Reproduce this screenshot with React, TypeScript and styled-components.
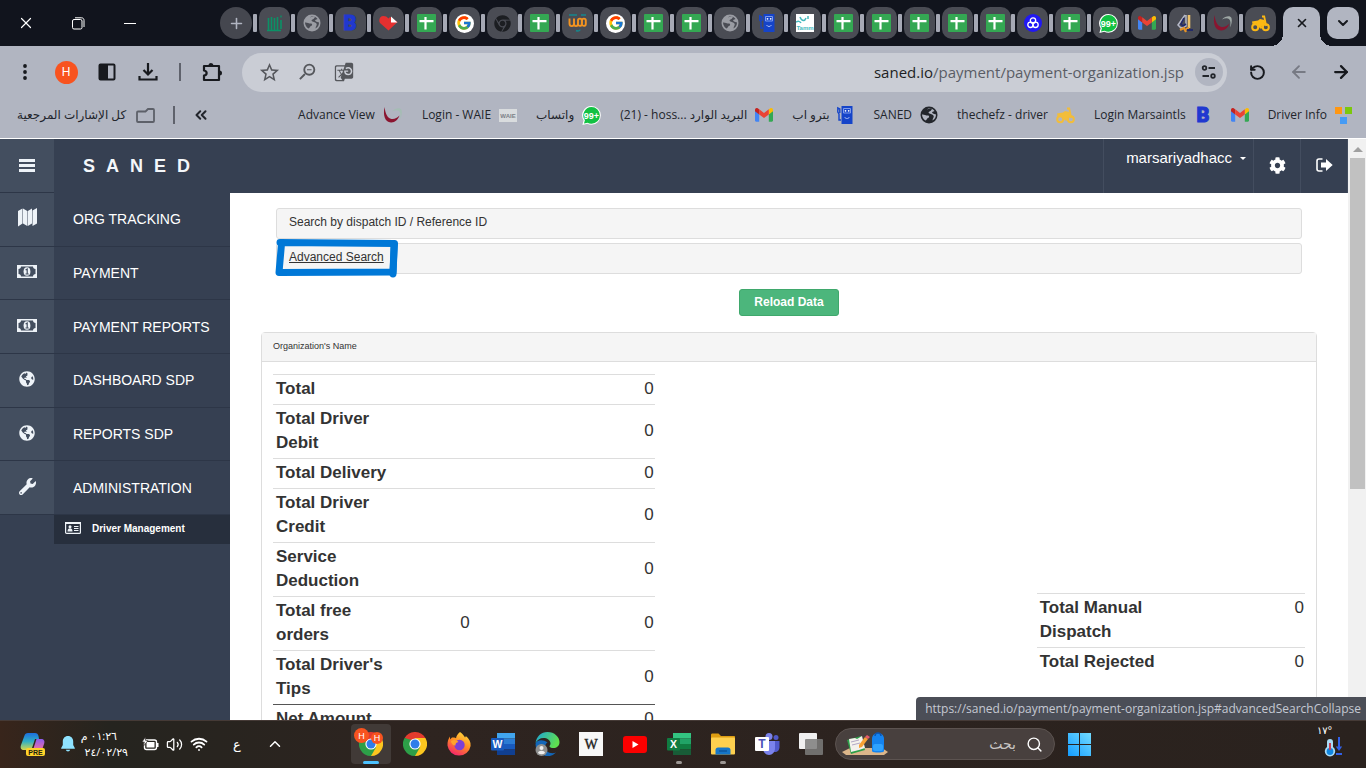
import type { ReactNode } from 'react';
import styled, { createGlobalStyle, css } from 'styled-components';
import { FaGlobeAmericas, FaWrench, FaCog, FaChrome } from 'react-icons/fa';
import { FcGoogle } from 'react-icons/fc';
import { MdStarBorder, MdZoomOut, MdGTranslate } from 'react-icons/md';
import { RotateCcw, ArrowLeft, ArrowRight, ChevronDown, ChevronUp, ChevronsLeft, X, Plus, Wifi, Volume2, Search } from 'lucide-react';

/* ---------- favicons ---------- */

const SheetsIcon = () => (
  <svg width="19" height="18" viewBox="0 0 19 18">
    <rect width="19" height="18" rx="1" fill="#34a853" />
    <path d="M2.5 7.2h14M8.5 3v12.5" stroke="#fff" strokeWidth="2.2" />
  </svg>
);

const GmailIcon = () => (
  <svg width="18" height="14" viewBox="0 0 18 14">
    <path d="M0 2.2v10.3c0 .7.5 1.2 1.2 1.2h3V6.3z" fill="#4285f4" />
    <path d="M18 2.2v10.3c0 .7-.5 1.2-1.2 1.2h-3V6.3z" fill="#34a853" />
    <path d="M13.8 1.4v5L18 3.3V1.9C18 .3 16.2-.6 14.9.4z" fill="#fbbc04" />
    <path d="M4.2 1.4v5L0 3.3V1.9C0 .3 1.8-.6 3.1.4z" fill="#c5221f" />
    <path d="M4.2 6.4V1.3L9 4.900l4.800-3.600v5.100L9 10z" fill="#ea4335" />
  </svg>
);

const GoogleIcon = () => (
  <GoogleDisc><FcGoogle size={16} /></GoogleDisc>
);

const LetterB = () => (
  <svg width="18" height="26" viewBox="0 0 18 26">
    <text x="9" y="20" textAnchor="middle" fontFamily="Roboto, sans-serif" fontWeight="900" fontSize="20" fill="#2038d0" stroke="#2038d0">B</text>
  </svg>
);

const WhatsAppBadge = () => (
  <svg width="19" height="19" viewBox="0 0 19 19">
    <path d="M9.500 0a9.300 9.300 0 0 1 0 18.700c-1.500 0-3-.4-4.200-1L.4 19l1.200-4.700A9.300 9.300 0 0 1 9.500 0z" fill="#fff" />
    <path d="M9.500 1a8.400 8.400 0 0 1 0 16.800c-1.500 0-2.800-.4-4-1.100L2 17.600l.9-3.300A8.400 8.400 0 0 1 9.500 1z" fill="#12c143" />
    <text x="9.500" y="12.500" textAnchor="middle" fontFamily="Liberation Sans, sans-serif" fontWeight="700" fontSize="9" fill="#fff">99+</text>
  </svg>
);

const PumpIcon = () => (
  <svg width="17" height="18" viewBox="0 0 17 18">
    <path d="M4.500 0h11v18H4.500z" fill="#1544c9" />
    <path d="M6.500 2.500h7v4.500h-7z" fill="none" stroke="#7f9bea" />
    <path d="M4 14H2V8L.8 6V2l2 1v4" fill="none" stroke="#1544c9" strokeWidth="1.400" />
    <path d="M7.500 11c1.200 2 3.800 2 5 0" fill="none" stroke="#a9bdf5" />
    <circle cx="8.500" cy="4.800" r=".9" fill="#fff" />
    <circle cx="11.700" cy="4.800" r=".9" fill="#fff" />
  </svg>
);

const SwooshIcon = ({ tail = '#9fa8a6' }: { tail?: string }) => (
  <svg width="20" height="18" viewBox="0 0 20 18">
    <path d="M1.500 1C0 9 1.500 16 8 16.500c4 .2 7-3 8.500-7-2.500 2.500-5 4-8 3.500C4.500 12.300 2.500 8 1.500 1z" fill="#8a1530" />
    <path d="M9 5.500C12 2.500 17 1 18.500 4c.8 2.500 0 7-1.500 9.500.8-4 .8-7-1-8.500-1.800-1.200-4.500-.5-7 .5z" fill={tail} />
  </svg>
);

const BarsLogo = () => (
  <svg width="16" height="18" viewBox="0 0 16 18">
    <path d="M1.500 4v12M4.500 3v13M7.500 4v12M10.500 3v13M14 6v9" stroke="#0b9166" strokeWidth="1.600" />
    <path d="M0 16.500h14M14 1.500v2" stroke="#0b9166" strokeWidth="1.400" />
  </svg>
);

const HeartIcon = () => (
  <svg width="19" height="18" viewBox="0 0 19 18">
    <path d="M9.500 16.500L1 9C-.8 6 1 2 4.500 2c2 0 3.500.8 5 2.500l1.500-1.500 7.500 5z" fill="#e53030" />
    <path d="M12 2.500v6h6.500z" fill="#fff" />
  </svg>
);

const UggLogo = () => (
  <svg width="19" height="18" viewBox="0 0 19 18">
    <path d="M1.500 4.500v5c0 3.500 4.500 3.500 4.500 0v-5M6 9.500c0 3.500 4 3.500 4 0M10 6.500c0-2.500 3.800-2.500 3.800 0v3.500c0 2.500-3.800 2.500-3.800 0zM14 6.500c0-2.500 3.800-2.500 3.800 0v3.500c0 2.500-3.800 2.500-3.800 0z" fill="none" stroke="#f39421" strokeWidth="1.900" />
    <path d="M1 1h8M13 1h5M8 16.500c2 1 4 .5 4-1" fill="none" stroke="#16868d" strokeWidth="1.400" />
  </svg>
);

const TammLogo = () => (
  <svg width="18" height="18" viewBox="0 0 18 18">
    <rect width="18" height="18" fill="#fff" />
    <path d="M4 3c2 5 5 4 6 1M12 2v3M0 8c2-1 4-1 5 1" fill="none" stroke="#44b9bd" strokeWidth="1.500" />
    <text x="9" y="16" textAnchor="middle" fontFamily="Liberation Sans, sans-serif" fontWeight="700" fontSize="6" fill="#44b9bd">Tamm</text>
  </svg>
);

const TrefoilIcon = () => (
  <svg width="18" height="18" viewBox="0 0 18 18">
    <circle cx="9" cy="9" r="9" fill="#2118f5" />
    <g fill="none" stroke="#fff" strokeWidth="1.300">
      <circle cx="9" cy="6.500" r="2.700" />
      <circle cx="6.500" cy="10.800" r="2.700" />
      <circle cx="11.500" cy="10.800" r="2.700" />
    </g>
  </svg>
);

const CraneIcon = () => (
  <svg width="19" height="19" viewBox="0 0 19 19">
    <path d="M10 1L3 11l3 3 5-2V1" fill="none" stroke="#b6b9c8" strokeWidth="1.500" />
    <path d="M9 4L6 10l2 2 3-2" fill="none" stroke="#20286b" strokeWidth="1.600" />
    <path d="M14 1v13" stroke="#edc26b" strokeWidth="2.600" />
    <path d="M5 16l4-2 2 4M11 15l3-1" fill="none" stroke="#e59327" strokeWidth="2.200" />
    <path d="M12 16h6" stroke="#20286b" strokeWidth="1.800" />
  </svg>
);

const BikeIcon = ({ color }: { color: string }) => (
  <svg width="19" height="17" viewBox="0 0 19 17">
    <g fill="none" stroke={color}>
      <circle cx="4.200" cy="12.300" r="3" strokeWidth="2" />
      <circle cx="14.800" cy="12.300" r="3" strokeWidth="2" />
      <path d="M11 1.500h2.200l2 9.500M3 8l5-.5 1.500 5h2L13.500 6" strokeWidth="1.800" />
    </g>
    <path d="M1 6.500l6-1L9 4l4.500 1-1.500 5.500-3 2.500-3.500-4.500-4 .5z" fill={color} />
  </svg>
);

const WaieLogo = () => (
  <svg width="18" height="13" viewBox="0 0 18 13">
    <rect width="18" height="13" fill="#d9dcde" />
    <text x="9" y="9" textAnchor="middle" fontFamily="Liberation Sans, sans-serif" fontWeight="700" fontSize="6" fill="#7b8086">WAIE</text>
  </svg>
);

const BlocksIcon = () => (
  <svg width="17" height="17" viewBox="0 0 17 17">
    <path d="M0 0h7v7H0z" fill="#ff9712" />
    <path d="M10 0h7v7h-7z" fill="#7cc80c" />
    <path d="M5 10h7v7H5z" fill="#459bf5" />
  </svg>
);

const GlobeIcon = ({ color, land }: { color: string; land: string }) => (
  <svg width="18" height="18" viewBox="0 0 18 18">
    <circle cx="9" cy="9" r="8.500" fill={color} />
    <path d="M2 8.500C3.500 8 5.500 9.500 8 9.500c1.500 0 1.500 2 0 2.500-1.500.300-1 2-2.500 2.500C3.500 13.500 2 11 2 8.500z" fill={land} />
    <path d="M7 3.500C9 2.500 10.500 2 12 3c-1 1-.5 1.800-2 2.300-1.600.5-2 1.500-.5 2.200 2 .6 3.500 1 4.200 2.500.3 1.500-1 2-1.200 4.500 2.500-1.500 3.500-3.500 3.500-6C15.500 8 13 8 12 6.500c.8-1.200 2-1 2.500-1.500C12 1.500 8.500 1.500 7 3.500z" fill={land} />
  </svg>
);

/* ---------- browser icons ---------- */

const DotsIcon = () => (
  <svg width="6" height="18" viewBox="0 0 6 18" fill="#17191e">
    <circle cx="3" cy="3" r="1.900" />
    <circle cx="3" cy="9" r="1.900" />
    <circle cx="3" cy="15" r="1.900" />
  </svg>
);

const SidePanelIcon = () => (
  <svg width="18" height="18" viewBox="0 0 18 18">
    <rect x="1.500" y="1.500" width="15" height="15" rx="1" fill="none" stroke="#17191e" strokeWidth="2" />
    <path d="M1 1h9v16H1z" fill="#17191e" />
  </svg>
);

const DownloadIcon = () => (
  <svg width="20" height="20" viewBox="0 0 20 20" fill="none" stroke="#17191e" strokeWidth="2.200">
    <path d="M10 1v11M5.500 8l4.500 4.500L14.500 8M1.500 14v3.500h17V14" />
  </svg>
);

const PuzzleIcon = () => (
  <svg width="20" height="20" viewBox="0 0 20 20">
    <path d="M2 4h15v14H2v-4.500c3.500-.5 3.500-4.500 0-5z" fill="none" stroke="#17191e" strokeWidth="2.200" strokeLinejoin="round" />
    <path d="M6.500 3.500a2.500 2.500 0 0 1 5 0zM17.500 8.500a2.500 2.500 0 0 1 0 5z" fill="#17191e" />
  </svg>
);

const TuneIcon = () => (
  <svg width="16" height="14" viewBox="0 0 16 14" fill="none" stroke="#22252b" strokeWidth="1.800">
    <circle cx="3.500" cy="3" r="1.800" />
    <path d="M7.500 3H14M1.500 11H8" />
    <circle cx="12" cy="11" r="1.800" />
  </svg>
);

const FolderOutline = () => (
  <svg width="19" height="15" viewBox="0 0 19 15">
    <path d="M2 14h15c.6 0 1-.4 1-1V2c0-.6-.4-1-1-1h-5L9.500 3.500H2c-.6 0-1 .4-1 1V13c0 .6.4 1 1 1z" fill="none" stroke="#5d6069" strokeWidth="1.800" />
  </svg>
);

const RestoreIcon = () => (
  <svg width="13" height="13" viewBox="0 0 13 13" fill="none" stroke="#fff">
    <rect x=".5" y="2.500" width="9.500" height="9.500" rx="1.500" />
    <path d="M3 .8h6.500c1.500 0 2.500 1 2.500 2.500V10" />
  </svg>
);

/* ---------- page icons ---------- */

const MenuIcon = () => (
  <svg width="16" height="14" viewBox="0 0 16 14">
    <path d="M0 1.500h16M0 6.500h16M0 11.500h16" stroke="#eef3f8" strokeWidth="2.800" />
  </svg>
);

const MapIcon = () => (
  <svg width="19" height="19" viewBox="0 0 19 19" fill="#eef3f8">
    <path d="M0 3L4.500.5v15L0 18.500zM5 .5L9.300 3v15L5 15.500zM9.800 3L14 .5v15L9.800 18zM14.500 2.500L19 0v15.500L14.500 18z" />
  </svg>
);

const MoneyIcon = () => (
  <svg width="20" height="13" viewBox="0 0 20 13">
    <path d="M0 0h20v13H0z" fill="#eef3f8" />
    <path d="M4 1.500h12c0 1.500 1 2.500 2.500 2.500v5C17 9 16 10 16 11.500H4C4 10 3 9 1.500 9V4C3 4 4 3 4 1.500z" fill="#434e5f" />
    <ellipse cx="10" cy="6.500" rx="3.400" ry="4.300" fill="#eef3f8" />
    <path d="M8.600 5l1.600-1v5M8.500 9h3.200" fill="none" stroke="#434e5f" strokeWidth="1.200" />
  </svg>
);

const IdCardIcon = () => (
  <svg width="16" height="12" viewBox="0 0 16 12">
    <rect x=".6" y=".6" width="14.800" height="10.800" rx="1" fill="none" stroke="#eef3f8" strokeWidth="1.200" />
    <path d="M0 0h16v2H0z" fill="#eef3f8" />
    <circle cx="5" cy="4.800" r="1.500" fill="#eef3f8" />
    <path d="M2.500 9.500C2.500 7 3.500 6.300 5 6.300s2.500.7 2.500 3.200z" fill="#eef3f8" />
    <path d="M9 4.500h4.500M9 6.500h4.500M9 8.500h4.500" stroke="#eef3f8" />
  </svg>
);

const SignOutIcon = () => (
  <svg width="17" height="14" viewBox="0 0 17 14">
    <path d="M6.500 1H3C1.800 1 1 1.800 1 3v8c0 1.200.8 2 2 2h3.500" fill="none" stroke="#fff" strokeWidth="1.600" />
    <path d="M5 4.500h5V1l6.700 6L10 13V9.500H5z" fill="#fff" />
  </svg>
);

/* ---------- taskbar icons ---------- */

const CopilotIcon = () => (
  <svg width="26" height="24" viewBox="0 0 26 24">
    <defs>
      <linearGradient id="cpA" x1="0" y1="0" x2="0" y2="1">
        <stop offset="0" stopColor="#1c6fe0" />
        <stop offset=".5" stopColor="#31b0c4" />
        <stop offset="1" stopColor="#d7d84a" />
      </linearGradient>
      <linearGradient id="cpB" x1="0" y1="0" x2="0" y2="1">
        <stop offset="0" stopColor="#8c5cf0" />
        <stop offset="1" stopColor="#f06fa0" />
      </linearGradient>
    </defs>
    <path d="M8 1h7c2 0 3 1 3.500 3L19 7h-4l-3 9c-.6 1.500-1.500 2-3 2H4c-3 0-4-2-3-5L4.500 3.500C5 2 6 1 8 1z" fill="url(#cpA)" />
    <path d="M16.500 7H21c3 0 4 2 3 5l-2 6h-9z" fill="url(#cpB)" />
    <rect x="6" y="16" width="19" height="8" rx="2" fill="#ffd32a" />
    <text x="15.500" y="22.700" textAnchor="middle" fontFamily="Liberation Sans, sans-serif" fontWeight="700" fontSize="7" fill="#221d10">PRE</text>
  </svg>
);

const BellIcon = () => (
  <svg width="14" height="16" viewBox="0 0 14 16" fill="#8fe3ff">
    <path d="M7 0C3.800 0 1.800 2.400 1.800 5.500V9L.2 12v.8h13.600V12L12.200 9V5.500C12.200 2.400 10.200 0 7 0zM4.800 13.800a2.300 2.300 0 0 0 4.400 0z" />
  </svg>
);

const BatteryIcon = () => (
  <svg width="17" height="14" viewBox="0 0 17 14">
    <rect x="2.500" y="3" width="12" height="9.500" rx="2" fill="none" stroke="#fff" strokeWidth="1.400" />
    <path d="M4.500 5h8v5.500h-8zM15 6h1.500v4H15z" fill="#fff" />
    <path d="M3.500 0L0 5h2.500L1.500 9 6 3.500H3.500z" fill="#fff" stroke="#2a2521" strokeWidth=".6" />
  </svg>
);

const ChromeIcon = () => (
  <svg width="24" height="24" viewBox="0 0 24 24">
    <path d="M12 12L1.600 6A12 12 0 0 1 22.400 6z" fill="#e33b2e" />
    <path d="M12 12L22.400 6A12 12 0 0 1 12 24z" fill="#fcc61f" />
    <path d="M12 12v12A12 12 0 0 1 1.600 6z" fill="#2d9f48" />
    <path d="M12 6h10.400L17 14.800z" fill="#fcc61f" />
    <path d="M6.800 15L1.600 6l7 2z" fill="#2d9f48" />
    <path d="M17.200 15L12 24l-1-7z" fill="#2d9f48" />
    <circle cx="12" cy="12" r="5.600" fill="#fff" />
    <circle cx="12" cy="12" r="4.500" fill="#2f7de9" />
  </svg>
);

const FirefoxIcon = () => (
  <svg width="24" height="24" viewBox="0 0 24 24">
    <defs>
      <linearGradient id="ffx" x1=".8" y1="0" x2=".3" y2="1">
        <stop offset="0" stopColor="#ffe03d" />
        <stop offset=".5" stopColor="#ff8a24" />
        <stop offset="1" stopColor="#f5216e" />
      </linearGradient>
    </defs>
    <path d="M13 0c3 2 4 4 5 5.500.8-.6.8-1.500.8-1.500C22 6.500 24 10 23.600 14A11.700 11.700 0 0 1 .5 13.500C.3 9.500 1.500 6.500 3 4.500v3L5 5.500c1.500 0 3 0 4 .8C9.500 3.500 11 1.500 13 0z" fill="url(#ffx)" />
    <circle cx="12.500" cy="13" r="5.200" fill="#7c3fd6" />
    <path d="M4 9c3-2 6-1 7.500 1-2 .3-3.300 1.500-3 3.500-2.500 0-4.500-2-4.500-4.500z" fill="#ffa32c" />
  </svg>
);

type OfficeProps = { tones: string[]; badge: string; letter: string };

const OfficeIcon = ({ tones, badge, letter }: OfficeProps) => (
  <svg width="24" height="22" viewBox="0 0 24 22">
    {tones.map((tone, i) => (
      <rect key={tone} x="6" y={i * 5.5} width="18" height="5.500" fill={tone} />
    ))}
    <rect y="5" width="13" height="12.500" rx="1" fill={badge} />
    <text x="6.500" y="15" textAnchor="middle" fontFamily="Liberation Sans, sans-serif" fontWeight="700" fontSize="10.500" fill="#fff">{letter}</text>
  </svg>
);

const EdgeIcon = () => (
  <svg width="25" height="24" viewBox="0 0 25 24">
    <defs>
      <linearGradient id="edg" x1="0" y1="0" x2="1" y2=".4">
        <stop offset="0" stopColor="#1aa3dc" />
        <stop offset="1" stopColor="#5fe04f" />
      </linearGradient>
    </defs>
    <path d="M.5 12A12 12 0 0 0 21 20.500c-5 2-11-.5-11-5.500 0-2 1-3.500 2.500-4.500C8 7 1 8 .5 12z" fill="#1266b8" />
    <path d="M.5 11C1.500 4.500 6 0 12.500 0 19.500 0 24.500 5 24.500 10c0 4-3 6-6 6-2.500 0-4-.8-4-1.800 0-.7 1-1.200 1-2.700C15.500 8 12 6 8.500 6 5 6 2 8 .5 11z" fill="url(#edg)" />
    <circle cx="6.500" cy="18" r="6" fill="#8e8f8e" />
    <circle cx="6.500" cy="16" r="2" fill="#eee" />
    <path d="M3 21c.3-3 6.700-3 7 0-2 1.700-5 1.700-7 0z" fill="#eee" />
  </svg>
);

const WikiIcon = () => (
  <svg width="24" height="24" viewBox="0 0 24 24">
    <rect width="24" height="24" fill="#f7f7f7" />
    <text x="12" y="17" textAnchor="middle" fontFamily="Liberation Serif, serif" fontSize="14" fill="#222" stroke="#222" strokeWidth=".4">W</text>
  </svg>
);

const YouTubeIcon = () => (
  <svg width="24" height="17" viewBox="0 0 24 17">
    <rect width="24" height="17" rx="3" fill="#fb0000" />
    <path d="M9.500 5v7l6-3.500z" fill="#fff" />
  </svg>
);

const FolderIcon = () => (
  <svg width="24" height="22" viewBox="0 0 24 22">
    <path d="M0 2C0 1 .5.5 1.500.5h6L10 3h13c.6 0 1 .4 1 1v4H0z" fill="#dd9d12" />
    <rect y="4.500" width="24" height="17" rx="1" fill="#fdd04f" />
    <path d="M4.500 21.500V17c0-1.500 1-2.500 2.500-2.500h10c1.500 0 2.500 1 2.500 2.500v4.500z" fill="#1576c8" />
    <path d="M8 18h8" stroke="#0c559c" strokeWidth="1.400" />
  </svg>
);

const TeamsIcon = () => (
  <svg width="25" height="22" viewBox="0 0 25 22">
    <circle cx="14" cy="3.500" r="3.500" fill="#7b83eb" />
    <circle cx="21" cy="4.500" r="2.500" fill="#5059c9" />
    <path d="M15 8h9.500v6c0 3-2 5-4.500 5s-5-2-5-5z" fill="#5059c9" />
    <path d="M8 8h12v7c0 4-2.500 7-6 7s-6-3-6-7z" fill="#7b83eb" />
    <rect y="4" width="14" height="14" rx="1" fill="#fff" />
    <text x="7" y="15" textAnchor="middle" fontFamily="Liberation Sans, sans-serif" fontWeight="700" fontSize="12" fill="#4a52b8">T</text>
  </svg>
);

const TaskViewIcon = () => (
  <svg width="24" height="22" viewBox="0 0 24 22">
    <rect width="18" height="16" rx="1" fill="#f0f0f0" />
    <rect x="6" y="6" width="18" height="16" rx="1" fill="#7d7c7b" fillOpacity=".85" />
  </svg>
);

const BackpackArt = () => (
  <svg width="46" height="24" viewBox="0 0 46 24">
    <path d="M0 20l8-4h32l6 4-4 3H4z" fill="#dcb68a" />
    <path d="M5 8l14-4 4 14-14 4z" fill="#2d9e49" />
    <path d="M7 7l6-1 2 1 5-3 3 12-6 2-8 2z" fill="#f4f2ec" />
    <path d="M9 10l8-2M10 13l8-2" stroke="#b2a8c4" />
    <path d="M17 13l6-8 3 2-6 8-3 1z" fill="#f8a134" />
    <path d="M23 5l2-2 3 2-2 2z" fill="#e65a6b" />
    <path d="M30 7c0-8 12-8 12 0v12c0 2-12 2-12 0z" fill="#1483ef" />
    <path d="M33 4c0-4 6-4 6 0" fill="none" stroke="#0b55b2" strokeWidth="1.400" />
    <rect x="31" y="12" width="10" height="7" rx="2" fill="#2ea2ff" />
  </svg>
);

const WindowsIcon = () => (
  <svg width="23" height="23" viewBox="0 0 23 23">
    <defs>
      <linearGradient id="win" x1="0" y1="1" x2="1" y2="0">
        <stop offset="0" stopColor="#139cff" />
        <stop offset="1" stopColor="#73dcff" />
      </linearGradient>
    </defs>
    <path d="M0 0h11v11H0zM12 0h11v11H12zM0 12h11v11H0zM12 12h11v11H12z" fill="url(#win)" />
  </svg>
);

const ThermometerIcon = () => (
  <svg width="18" height="20" viewBox="0 0 18 20">
    <path d="M3 5a3 3 0 0 1 6 0v5a5.200 5.200 0 1 1-6 0z" fill="#a9dcf7" />
    <circle cx="6" cy="14.500" r="3.400" fill="#1187e0" />
    <path d="M6 6v7" stroke="#c7405a" strokeWidth="2" />
    <path d="M15 0v11" stroke="#3160e8" strokeWidth="2" />
    <path d="M11.800 9.500h6.400L15 14z" fill="#3160e8" />
    <path d="M12 17h6" stroke="#3160e8" strokeWidth="2" />
  </svg>
);

/* ---------- data ---------- */

const tabs: { title: string; icon: ReactNode }[] = [
  { title: 'Dashboard', icon: <BarsLogo /> },
  { title: 'Saned', icon: <GlobeIcon color="#9a9ca3" land="#4a4c54" /> },
  { title: 'Login Marsaintls', icon: <LetterB /> },
  { title: 'Orders', icon: <HeartIcon /> },
  { title: 'Sheet 1', icon: <SheetsIcon /> },
  { title: 'Google', icon: <GoogleIcon /> },
  { title: 'Web Store', icon: <FaChrome size={17} color="#1c1e22" /> },
  { title: 'Sheet 2', icon: <SheetsIcon /> },
  { title: 'Delivery', icon: <UggLogo /> },
  { title: 'Google search', icon: <GoogleIcon /> },
  { title: 'Sheet 3', icon: <SheetsIcon /> },
  { title: 'Sheet 4', icon: <SheetsIcon /> },
  { title: 'Saned drivers', icon: <GlobeIcon color="#9a9ca3" land="#4a4c54" /> },
  { title: 'Petro App', icon: <PumpIcon /> },
  { title: 'Tamm', icon: <TammLogo /> },
  { title: 'Sheet 5', icon: <SheetsIcon /> },
  { title: 'Sheet 6', icon: <SheetsIcon /> },
  { title: 'Sheet 7', icon: <SheetsIcon /> },
  { title: 'Sheet 8', icon: <SheetsIcon /> },
  { title: 'Sheet 9', icon: <SheetsIcon /> },
  { title: 'Accounts', icon: <TrefoilIcon /> },
  { title: 'Sheet 10', icon: <SheetsIcon /> },
  { title: 'WhatsApp', icon: <WhatsAppBadge /> },
  { title: 'Gmail', icon: <GmailIcon /> },
  { title: 'Projects', icon: <CraneIcon /> },
  { title: 'Advance View', icon: <SwooshIcon /> },
  { title: 'thechefz', icon: <BikeIcon color="#fcb813" /> },
];

const bookmarks: { label: string; icon: ReactNode; rtl?: boolean }[] = [
  { label: 'Advance View', icon: <SwooshIcon tail="#a5bdb4" /> },
  { label: 'Login - WAIE', icon: <WaieLogo /> },
  { label: 'واتساب', icon: <WhatsAppBadge />, rtl: true },
  { label: '(21) - hoss... البريد الوارد', icon: <GmailIcon /> },
  { label: 'بترو اب', icon: <PumpIcon />, rtl: true },
  { label: 'SANED', icon: <GlobeIcon color="#23262c" land="#b1b5c1" /> },
  { label: 'thechefz - driver', icon: <BikeIcon color="#f2bd3a" /> },
  { label: 'Login Marsaintls', icon: <LetterB /> },
  { label: '', icon: <GmailIcon /> },
  { label: 'Driver Info', icon: <BlocksIcon /> },
];

const navItems: { label: string; icon: ReactNode }[] = [
  { label: 'ORG TRACKING', icon: <MapIcon /> },
  { label: 'PAYMENT', icon: <MoneyIcon /> },
  { label: 'PAYMENT REPORTS', icon: <MoneyIcon /> },
  { label: 'DASHBOARD SDP', icon: <FaGlobeAmericas size={16} /> },
  { label: 'REPORTS SDP', icon: <FaGlobeAmericas size={16} /> },
  { label: 'ADMINISTRATION', icon: <FaWrench size={17} /> },
];

const totals: { label: string; count?: string; value: string; strong?: boolean }[] = [
  { label: 'Total', value: '0' },
  { label: 'Total Driver Debit', value: '0' },
  { label: 'Total Delivery', value: '0' },
  { label: 'Total Driver Credit', value: '0' },
  { label: 'Service Deduction', value: '0' },
  { label: 'Total free orders', count: '0', value: '0' },
  { label: "Total Driver's Tips", value: '0' },
  { label: 'Net Amount', value: '0', strong: true },
];

const taskApps: { name: string; icon: ReactNode; running?: boolean }[] = [
  { name: 'Chrome', icon: <ChromeIcon /> },
  { name: 'Firefox', icon: <FirefoxIcon /> },
  { name: 'Word', icon: <OfficeIcon tones={['#41a5ee', '#2b7cd3', '#185abd', '#103f91']} badge="#185abd" letter="W" /> },
  { name: 'Edge', icon: <EdgeIcon /> },
  { name: 'Wikipedia', icon: <WikiIcon /> },
  { name: 'YouTube', icon: <YouTubeIcon /> },
  { name: 'Excel', icon: <OfficeIcon tones={['#33c481', '#21a366', '#107c41', '#185c37']} badge="#107c41" letter="X" />, running: true },
  { name: 'Explorer', icon: <FolderIcon />, running: true },
  { name: 'Teams', icon: <TeamsIcon /> },
  { name: 'Task view', icon: <TaskViewIcon /> },
];

const App = () => (
  <Screen>
    <GlobalStyle />
    <TabStrip>
      <WindowButton aria-label="Close window"><X size={18} strokeWidth={1.6} /></WindowButton>
      <WindowButton aria-label="Restore"><RestoreIcon /></WindowButton>
      <WindowButton aria-label="Minimize"><MinimizeLine /></WindowButton>
      <NewTab aria-label="New tab"><Plus size={17} strokeWidth={2.2} /></NewTab>
      <TabList>
        {tabs.map((tab) => (
          <TabSlot key={tab.title}>
            <TabDivider />
            <TabButton aria-label={tab.title}>{tab.icon}</TabButton>
          </TabSlot>
        ))}
      </TabList>
      <ActiveTab aria-label="Close tab"><X size={14} strokeWidth={2.8} /></ActiveTab>
      <TabSearch aria-label="Search tabs"><ChevronDown size={16} strokeWidth={3} /></TabSearch>
    </TabStrip>

    <Toolbar>
      <ToolGroup>
        <ToolButton aria-label="Menu"><DotsIcon /></ToolButton>
        <ToolButton aria-label="Profile"><Avatar>H</Avatar></ToolButton>
        <ToolButton aria-label="Side panel"><SidePanelIcon /></ToolButton>
        <ToolButton aria-label="Downloads"><DownloadIcon /></ToolButton>
        <ToolDivider />
        <ToolButton aria-label="Extensions"><PuzzleIcon /></ToolButton>
      </ToolGroup>
      <Omnibox>
        <OmniButton aria-label="Bookmark"><MdStarBorder size={23} /></OmniButton>
        <OmniButton aria-label="Zoom" $flip><MdZoomOut size={22} /></OmniButton>
        <OmniButton aria-label="Translate" $flip><MdGTranslate size={20} /></OmniButton>
        <Url><b>saned.io</b>/payment/payment-organization.jsp</Url>
        <SiteInfo aria-label="Site information"><TuneIcon /></SiteInfo>
      </Omnibox>
      <HistoryGroup>
        <ToolButton aria-label="Reload"><RotateCcw size={17} strokeWidth={2.8} /></ToolButton>
        <ToolButton aria-label="Forward" $muted><ArrowLeft size={20} strokeWidth={2.2} /></ToolButton>
        <ToolButton aria-label="Back"><ArrowRight size={20} strokeWidth={2.7} /></ToolButton>
      </HistoryGroup>
    </Toolbar>

    <BookmarkBar>
      <AllBookmarks href="#all" dir="rtl"><FolderOutline /><span>كل الإشارات المرجعية</span></AllBookmarks>
      <ToolDivider />
      <MoreButton aria-label="More bookmarks"><ChevronsLeft size={18} strokeWidth={2.7} /></MoreButton>
      <BookmarkList>
        {bookmarks.map((item, i) => (
          <Bookmark key={i} href="#bookmark" aria-label={item.label || 'Gmail'}>
            {item.label && <span dir={item.rtl ? 'rtl' : 'ltr'}>{item.label}</span>}
            {item.icon}
          </Bookmark>
        ))}
      </BookmarkList>
    </BookmarkBar>

    <Page>
      <PageMain>
        <Header>
          <MenuToggle aria-label="Toggle menu"><MenuIcon /></MenuToggle>
          <Brand>SANED</Brand>
          <UserMenu>marsariyadhacc<Caret /></UserMenu>
          <HeaderButton aria-label="Settings"><FaCog size={17} /></HeaderButton>
          <HeaderButton aria-label="Sign out"><SignOutIcon /></HeaderButton>
        </Header>
        <Columns>
          <Sidebar>
            <NavList>
              {navItems.map((item) => (
                <NavItem key={item.label} href="#nav">
                  <NavIcon>{item.icon}</NavIcon>
                  <NavLabel>{item.label}</NavLabel>
                </NavItem>
              ))}
            </NavList>
            <SubItem href="#drivers"><IdCardIcon />Driver Management</SubItem>
          </Sidebar>
          <Content>
            <SearchPanels>
              <SearchPanel><a href="#searchCollapse">Search by dispatch ID / Reference ID</a></SearchPanel>
              <SearchPanel $hover>
                <a href="#advancedSearchCollapse">Advanced Search</a>
                <Marker viewBox="0 0 126 44">
                  <path d="M6 5.500L120.500 6.500L119 35L5 35.500L7.500 7" />
                  <path d="M120 8l-1 29" />
                </Marker>
              </SearchPanel>
            </SearchPanels>
            <ReloadButton>Reload Data</ReloadButton>
            <Panel>
              <PanelHeading>Organization's Name</PanelHeading>
              <PanelBody>
                <TotalsTable>
                  <tbody>
                    {totals.map((row) => (
                      <TotalsRow key={row.label} $strong={row.strong}>
                        <th scope="row">{row.label}</th>
                        <CountCell>{row.count}</CountCell>
                        <td>{row.value}</td>
                      </TotalsRow>
                    ))}
                  </tbody>
                </TotalsTable>
                <ManualTable>
                  <tbody>
                    <TotalsRow><th scope="row">Total Manual Dispatch</th><td>0</td></TotalsRow>
                    <TotalsRow><th scope="row">Total Rejected</th><td>0</td></TotalsRow>
                  </tbody>
                </ManualTable>
              </PanelBody>
            </Panel>
          </Content>
        </Columns>
      </PageMain>
      <Scrollbar><ArrowUp /><Thumb /></Scrollbar>
      <StatusBubble>https://saned.io/payment/payment-organization.jsp#advancedSearchCollapse</StatusBubble>
    </Page>

    <Taskbar>
      <Tray>
        <CopilotIcon />
        <BellIcon />
        <Clock dir="rtl"><span>٠١:٢٦ م</span><span dir="ltr">٢٤/٠٢/٢٩</span></Clock>
        <TrayIcons>
          <BatteryIcon />
          <Volume2 size={17} strokeWidth={1.8} />
          <Wifi size={18} strokeWidth={2.4} />
        </TrayIcons>
        <Language>ع</Language>
        <ChevronUp size={18} />
      </Tray>
      <Apps>
        <AppButton aria-label="Chrome profile" $active>
          <ChromeIcon />
          <ProfileDot>H</ProfileDot>
          <ProfileDot $small>H</ProfileDot>
        </AppButton>
        {taskApps.map((app) => (
          <AppButton key={app.name} aria-label={app.name} $running={app.running}>{app.icon}</AppButton>
        ))}
      </Apps>
      <SearchBox>
        <BackpackArt />
        <input dir="rtl" placeholder="بحث" aria-label="بحث" />
        <Search size={17} />
      </SearchBox>
      <StartButton aria-label="Start"><WindowsIcon /></StartButton>
      <Weather><span dir="ltr">١٧°</span><ThermometerIcon /></Weather>
    </Taskbar>
  </Screen>
);

const uiFont = css`'Open Sans', 'Noto Sans', 'DejaVu Sans', sans-serif`;

const GlobalStyle = createGlobalStyle`
  *, *::before, *::after {
    box-sizing: border-box;
  }
  body {
    margin: 0;
    font-family: 'Liberation Sans', Arial, sans-serif;
    color: #333;
  }
  button {
    border: 0;
    padding: 0;
    background: none;
    font: inherit;
    color: inherit;
  }
  a {
    color: inherit;
    text-decoration: none;
  }
  svg {
    flex: none;
  }
`;

const Screen = styled.div`
  display: flex;
  flex-direction: column;
  height: 100vh;
  overflow: hidden;
`;

const centered = css`
  display: flex;
  align-items: center;
  justify-content: center;
`;

const TabStrip = styled.div`
  display: flex;
  align-items: center;
  flex: none;
  height: 46px;
  background: #11141d;
  color: #fff;
`;
const WindowButton = styled.button`
  ${centered}
  width: 52px;
  height: 46px;
`;
const MinimizeLine = styled.span`
  width: 12px;
  height: 1px;
  background: #fff;
`;
const NewTab = styled.button`
  ${centered}
  width: 32px;
  height: 32px;
  margin-left: 64px;
  border-radius: 50%;
  background: #45474f;
  color: #b1b5c1;
`;
const TabList = styled.div`
  display: flex;
  flex: 1;
  margin-left: 1px;
`;
const TabSlot = styled.div`
  display: flex;
  flex: 1;
  align-items: center;
`;
const TabDivider = styled.span`
  width: 4px;
  height: 18px;
  margin-right: 2px;
  border-radius: 1px;
  background: #a6a9b5;
`;
const TabButton = styled.button`
  ${centered}
  width: 31px;
  height: 32px;
  border-radius: 10px;
  background: #4a4c54;
`;
const GoogleDisc = styled.span`
  ${centered}
  width: 19px;
  height: 19px;
  border-radius: 50%;
  background: #fff;
`;
const ActiveTab = styled.button`
  ${centered}
  position: relative;
  align-self: flex-end;
  width: 37px;
  height: 39px;
  padding-bottom: 7px;
  margin: 0 7px 0 6px;
  border-radius: 10px 10px 0 0;
  background: #b1b5c1;
  color: #17191e;

  &::before,
  &::after {
    content: '';
    position: absolute;
    bottom: 0;
    width: 12px;
    height: 12px;
  }
  &::before {
    right: 100%;
    background: radial-gradient(circle at 0 0, transparent 12px, #b1b5c1 12px);
  }
  &::after {
    left: 100%;
    background: radial-gradient(circle at 100% 0, transparent 12px, #b1b5c1 12px);
  }
`;
const TabSearch = styled.button`
  ${centered}
  width: 32px;
  height: 32px;
  margin-right: 7px;
  border-radius: 10px;
  background: #b1b5c1;
  color: #17191e;
`;

const Toolbar = styled.div`
  display: flex;
  align-items: center;
  flex: none;
  height: 52px;
  background: #b1b5c1;
  color: #17191e;
`;
const ToolButton = styled.button<{ $muted?: boolean }>`
  ${centered}
  width: 32px;
  height: 32px;
  color: ${({ $muted }) => ($muted ? '#777a84' : '#17191e')};
`;
const ToolDivider = styled.span`
  flex: none;
  width: 2px;
  height: 18px;
  background: #5f626c;
`;
const ToolGroup = styled.div`
  display: flex;
  align-items: center;
  gap: 9px;
  padding: 0 14px 0 9px;

  ${ToolDivider} {
    margin: 0 6px;
  }
`;
const Avatar = styled.span`
  ${centered}
  width: 23px;
  height: 23px;
  border-radius: 50%;
  background: #f8531f;
  color: #fff;
  font-size: 12px;
`;
const Omnibox = styled.div`
  display: flex;
  flex: 1;
  align-items: center;
  height: 39px;
  padding: 0 4px 0 9px;
  border-radius: 20px;
  background: #cacdd5;
`;
const OmniButton = styled.button<{ $flip?: boolean }>`
  ${centered}
  width: 37px;
  height: 32px;
  color: #55575c;

  svg {
    transform: ${({ $flip }) => ($flip ? 'scaleX(-1)' : 'none')};
  }
`;
const Url = styled.div`
  flex: 1;
  margin-right: 11px;
  text-align: right;
  font: 15px/22px ${uiFont};
  color: #5a5d66;

  b {
    font-weight: 400;
    color: #1d1f24;
  }
`;
const SiteInfo = styled.button`
  ${centered}
  width: 28px;
  height: 28px;
  border-radius: 50%;
  background: #b1b5c1;
`;
const HistoryGroup = styled.div`
  display: flex;
  align-items: center;
  gap: 10px;
  padding: 0 9px 0 14px;
`;

const BookmarkBar = styled.div`
  display: flex;
  align-items: center;
  flex: none;
  height: 41px;
  padding: 0 14px 6px 17px;
  border-bottom: 1px solid #fff;
  background: #b1b5c1;
  font: 12px/18px ${uiFont};
  color: #22252c;
`;
const AllBookmarks = styled.a`
  display: flex;
  align-items: center;
  gap: 10px;
  margin-right: 18px;
`;
const MoreButton = styled.button`
  ${centered}
  width: 52px;
  height: 24px;
`;
const BookmarkList = styled.nav`
  display: flex;
  flex: 1;
  align-items: center;
  justify-content: flex-end;
  gap: 19px;
  height: 26px;
`;
const Bookmark = styled.a`
  display: flex;
  align-items: center;
  gap: 8px;
  white-space: nowrap;
`;

const Page = styled.div`
  position: relative;
  display: flex;
  flex: 1;
  min-height: 0;
`;
const PageMain = styled.div`
  display: flex;
  flex: 1;
  flex-direction: column;
  min-height: 0;
  overflow: hidden;
  background: #fff;
`;
const Header = styled.header`
  display: flex;
  flex: none;
  height: 54px;
  border-right: 1px solid #434d5f;
  background: #364052;
  color: #fff;
`;
const MenuToggle = styled.button`
  ${centered}
  width: 54px;
  border-bottom: 1px solid #2d3647;
  background: #434e5f;
`;
const Brand = styled.h1`
  flex: 1;
  margin: 0;
  padding-left: 29px;
  font-size: 18px;
  line-height: 54px;
  letter-spacing: 11px;
  color: #f4f7fa;
`;
const UserMenu = styled.button`
  display: flex;
  justify-content: flex-end;
  width: 150px;
  padding: 9px 7px 0 0;
  border-left: 1px solid #434d5f;
  font-size: 15px;
  line-height: 20px;
`;
const Caret = styled.span`
  height: 3px;
  margin: 9px 0 0 8px;
  border: 3px solid transparent;
  border-top-color: #fff;
  border-bottom: 0;
`;
const HeaderButton = styled.button`
  ${centered}
  width: 47px;
  padding-bottom: 2px;
  border-left: 1px solid #434d5f;
`;

const Columns = styled.div`
  display: flex;
  flex: 1;
  min-height: 0;
`;
const Sidebar = styled.aside`
  flex: none;
  width: 230px;
  background: #364052;
  color: #fff;
`;
const NavList = styled.nav`
  display: flex;
  flex-direction: column;
  height: 322px;
`;
const NavItem = styled.a`
  display: flex;
  flex: 1;
  border-bottom: 1px solid #2d3647;
`;
const NavIcon = styled.span`
  ${centered}
  width: 54px;
  padding-bottom: 3px;
  background: #434e5f;
  color: #eef3f8;
`;
const NavLabel = styled.span`
  display: flex;
  align-items: center;
  padding-left: 19px;
  font-size: 14px;
`;
const SubItem = styled.a`
  display: flex;
  align-items: center;
  gap: 11px;
  height: 29px;
  margin-left: 54px;
  padding: 0 0 3px 11px;
  background: #272f3d;
  font-size: 10px;
  font-weight: 700;
`;

const Content = styled.main`
  flex: 1;
  min-width: 0;
  padding: 15px 31px 0;
`;
const SearchPanels = styled.div`
  display: flex;
  flex-direction: column;
  gap: 4px;
  padding: 0 15px;
`;
const SearchPanel = styled.div<{ $hover?: boolean }>`
  position: relative;
  padding: 4px 12px 7px;
  border: 1px solid #ddd;
  border-radius: 3px;
  background: #f5f5f5;
  font-size: 12px;
  line-height: 18px;

  a {
    text-decoration: ${({ $hover }) => ($hover ? 'underline' : 'none')};
  }
`;
const Marker = styled.svg`
  position: absolute;
  top: -7px;
  left: -3px;
  width: 126px;
  height: 44px;
  fill: none;
  stroke: #0078d7;
  stroke-width: 7;
  stroke-linecap: round;
  stroke-linejoin: round;
  pointer-events: none;
`;
const ReloadButton = styled.button`
  display: block;
  height: 27px;
  margin: 15px auto 16px;
  padding: 0 14px 2px;
  border: 1px solid #3fa86c;
  border-radius: 3px;
  background: #4cb67c;
  color: #fff;
  font-size: 12px;
  font-weight: 700;
`;
const Panel = styled.section`
  border: 1px solid #ddd;
  border-radius: 4px;
`;
const PanelHeading = styled.h2`
  margin: 0;
  padding: 0 11px 2px;
  border-bottom: 1px solid #ddd;
  background: #f5f5f5;
  font-size: 9px;
  font-weight: 400;
  line-height: 26px;
`;
const PanelBody = styled.div`
  display: grid;
  grid-template-columns: 37fr 37fr 26fr;
  align-items: start;
  padding: 12px 11px;
`;
const TotalsTable = styled.table`
  width: 100%;
  table-layout: fixed;
  border-spacing: 0;
  font-size: 17px;
  line-height: 24px;
`;
const ManualTable = styled(TotalsTable)`
  grid-column: 3;
  margin-top: 219px;

  td {
    vertical-align: top;
  }
`;
const TotalsRow = styled.tr<{ $strong?: boolean }>`
  th,
  td {
    padding: 2px 1px 3px 3px;
    border-top: 1px solid ${({ $strong }) => ($strong ? '#555' : '#ddd')};
    text-align: right;
  }
  th {
    text-align: left;
  }
`;
const CountCell = styled.td`
  && {
    text-align: center;
  }
`;

const Scrollbar = styled.div`
  display: flex;
  flex: none;
  flex-direction: column;
  align-items: center;
  width: 18px;
  padding-left: 1px;
  background: #f1f1f1;
`;
const ArrowUp = styled.span`
  margin: 8px 0 6px;
  border: 5px solid transparent;
  border-top: 0;
  border-bottom-color: #a0a0a0;
`;
const Thumb = styled.span`
  width: 15px;
  height: 57%;
  background: #c1c1c1;
`;
const StatusBubble = styled.div`
  position: absolute;
  right: 0;
  bottom: 0;
  padding: 3px 5px 2px 9px;
  border-top-left-radius: 4px;
  background: #4b4e57;
  color: #c5c9d3;
  font: 12px/18px ${uiFont};
`;

const Taskbar = styled.footer`
  display: flex;
  flex: none;
  align-items: center;
  height: 48px;
  padding-bottom: 1px;
  border-top: 1px solid #453a36;
  background: linear-gradient(90deg, #38251b, #25241f 8%, #28241f 16%, #2e2420 30%, #2a221e);
  color: #fff;
`;
const Tray = styled.div`
  display: flex;
  align-items: center;
  width: 349px;
  padding-left: 20px;

  > svg:nth-child(2) {
    margin: 0 7px 0 15px;
  }
`;
const Clock = styled.div`
  display: flex;
  flex-direction: column;
  width: 46px;
  font: 11px/16px ${uiFont};

  span {
    text-align: right;
    white-space: nowrap;
  }
  span:first-child {
    padding-right: 11px;
  }
`;
const TrayIcons = styled.div`
  display: flex;
  align-items: center;
  gap: 7px;
  margin-left: 14px;
`;
const Language = styled.span`
  width: 20px;
  margin: 0 19px;
  font: 13px/18px ${uiFont};
  text-align: center;
`;
const Apps = styled.div`
  display: flex;
  gap: 4px;
  padding: 0 2px;
`;
const AppButton = styled.button<{ $active?: boolean; $running?: boolean }>`
  ${centered}
  position: relative;
  width: 40px;
  height: 40px;
  border-radius: 4px;
  background: ${({ $active }) => ($active ? '#413a37' : 'none')};

  &::after {
    content: '';
    position: absolute;
    bottom: 0;
    width: ${({ $active }) => ($active ? 16 : 6)}px;
    height: 3px;
    border-radius: 2px;
    background: ${({ $active, $running }) => ($active ? '#4cc2ff' : $running ? '#9c9794' : 'none')};
  }
`;
const ProfileDot = styled.span<{ $small?: boolean }>`
  ${centered}
  position: absolute;
  top: ${({ $small }) => ($small ? 8 : 4)}px;
  left: ${({ $small }) => ($small ? 20 : 3)}px;
  width: ${({ $small }) => ($small ? 12 : 15)}px;
  height: ${({ $small }) => ($small ? 12 : 15)}px;
  border-radius: 50%;
  background: #f8531f;
  font-size: 9px;
`;
const SearchBox = styled.label`
  display: flex;
  align-items: center;
  width: 220px;
  height: 32px;
  margin-left: 2px;
  padding: 0 11px 0 6px;
  border: 1px solid #5c5350;
  border-radius: 16px;
  background: #48403e;

  input {
    flex: 1;
    min-width: 0;
    padding: 0 10px;
    border: 0;
    background: none;
    font: 14px/20px ${uiFont};
    color: #fff;
  }
  input::placeholder {
    color: #c9c5c3;
  }
`;
const StartButton = styled.button`
  ${centered}
  width: 48px;
  height: 40px;
`;
const Weather = styled.div`
  position: relative;
  display: flex;
  margin-left: auto;
  padding: 6px 24px 0 0;

  span {
    position: absolute;
    top: -7px;
    right: 34px;
    font: 10px/12px ${uiFont};
  }
`;

export default App;
